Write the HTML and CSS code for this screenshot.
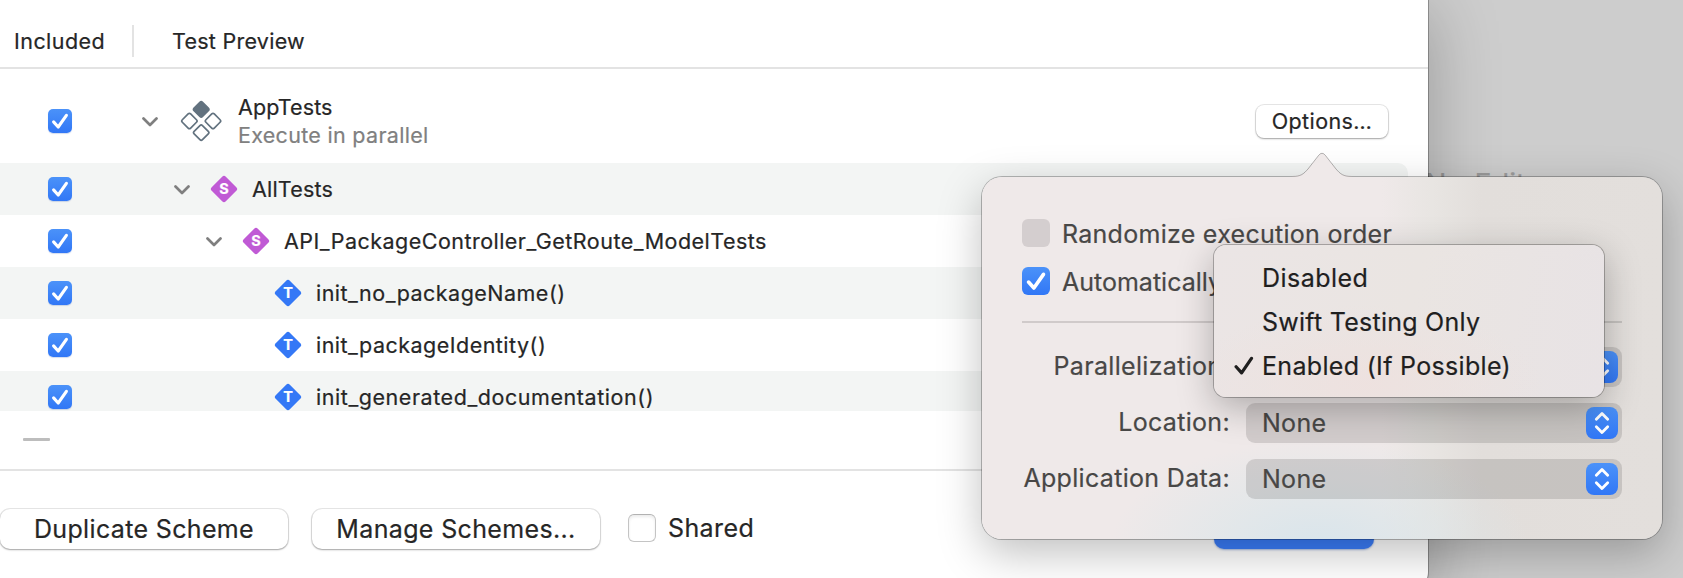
FILE: index.html
```html
<!DOCTYPE html>
<html lang="en">
<head>
<meta charset="utf-8">
<title>Scheme Tests</title>
<link rel="stylesheet" href="styles.css">
</head>
<body>
<svg class="defs" aria-hidden="true">
  <defs>
    <symbol id="tick" viewBox="0 0 24 24"><path d="M5.6 12.9 L10.2 18 L18.4 6.3" fill="none" stroke="#fff" stroke-width="3.1" stroke-linecap="round" stroke-linejoin="round"/></symbol>
    <symbol id="chev" viewBox="0 0 16 10"><path d="M1.5 1.5 L8 8 L14.5 1.5" fill="none" stroke="#7f7f7f" stroke-width="2.7" stroke-linecap="round" stroke-linejoin="round"/></symbol>
    <symbol id="diamond" viewBox="0 0 28 28"><rect x="4" y="4" width="20" height="20" rx="2.6" transform="rotate(45 14 14)"/></symbol>
    <symbol id="updown" viewBox="0 0 32 32"><path d="M10.3 12.3 L16 6.5 L21.7 12.3 M10.3 19.7 L16 25.5 L21.7 19.7" fill="none" stroke="#fff" stroke-width="2.8" stroke-linecap="round" stroke-linejoin="round"/></symbol>
  </defs>
</svg>
<div class="screen">
  <main class="sheet">
    <header class="head">
      <span class="col-included">Included</span>
      <span class="col-sep"></span>
      <span class="col-preview">Test Preview</span>
    </header>
    <div class="list">
      <div class="row target">
        <span class="check"><svg><use href="#tick"/></svg></span>
        <svg class="chev lv0"><use href="#chev"/></svg>
        <svg class="target-icon" viewBox="0 0 42 42">
          <g fill="none" stroke="#62727f" stroke-width="1.7">
            <rect x="15.3" y="3.5" width="11.8" height="11.8" rx="1.8" transform="rotate(45 21.2 9.4)" fill="#62727f"/>
            <rect x="3.5" y="15.1" width="11.8" height="11.8" rx="1.8" transform="rotate(45 9.4 21)"/>
            <rect x="27.1" y="15.1" width="11.8" height="11.8" rx="1.8" transform="rotate(45 33 21)"/>
            <rect x="15.3" y="26.7" width="11.8" height="11.8" rx="1.8" transform="rotate(45 21.2 32.6)"/>
          </g>
        </svg>
        <div class="target-text"><span class="name">AppTests</span><span class="sub">Execute in parallel</span></div>
        <button class="btn small">Options…</button>
      </div>
      <div class="row alt">
        <span class="check"><svg><use href="#tick"/></svg></span>
        <svg class="chev lv1"><use href="#chev"/></svg>
        <span class="kind suite"><svg><use href="#diamond"/></svg><b>S</b></span>
        <span class="label tight">AllTests</span>
      </div>
      <div class="row">
        <span class="check"><svg><use href="#tick"/></svg></span>
        <svg class="chev lv2"><use href="#chev"/></svg>
        <span class="kind suite"><svg><use href="#diamond"/></svg><b>S</b></span>
        <span class="label">API_PackageController_GetRoute_ModelTests</span>
      </div>
      <div class="row alt">
        <span class="check"><svg><use href="#tick"/></svg></span>
        <span class="kind test"><svg><use href="#diamond"/></svg><b>T</b></span>
        <span class="label wide">init_no_packageName()</span>
      </div>
      <div class="row">
        <span class="check"><svg><use href="#tick"/></svg></span>
        <span class="kind test"><svg><use href="#diamond"/></svg><b>T</b></span>
        <span class="label wide">init_packageIdentity()</span>
      </div>
      <div class="row alt">
        <span class="check"><svg><use href="#tick"/></svg></span>
        <span class="kind test"><svg><use href="#diamond"/></svg><b>T</b></span>
        <span class="label wider">init_generated_documentation()</span>
      </div>
    </div>
    <div class="tools"><span class="minus"></span></div>
    <footer class="foot">
      <button class="btn">Duplicate Scheme</button>
      <button class="btn">Manage Schemes...</button>
      <label class="shared"><span class="box"></span>Shared</label>
      <span class="primary"></span>
    </footer>
  </main>
  <aside class="editor"><span>No Editor</span></aside>

  <section class="popover">
    <svg class="arrow" viewBox="0 0 64 27"><path d="M2 25 C11 25 13.500 23 18 18 L28.500 4.500 Q32 0 35.500 4.500 L46 18 C50.500 23 53 25 62 25 V27 H2 Z" fill="#efe9e9"/><path d="M2 25.500 C11 25.500 13.500 23 18 18 L28.500 4.500 Q32 0 35.500 4.500 L46 18 C50.500 23 53 25.500 62 25.500" fill="none" stroke="#000" stroke-opacity=".28"/></svg>
    <div class="opt"><span class="box28"></span><span class="cap">Randomize execution order</span></div>
    <div class="opt second"><span class="box28 on"><svg><use href="#tick"/></svg></span><span class="cap auto">Automatically</span></div>
    <hr class="rule">
    <div class="form">
      <span class="key">Parallelization:</span><span class="pop"><i></i><span class="step"><svg><use href="#updown"/></svg></span></span>
      <span class="key">Location:</span><span class="pop"><i>None</i><span class="step"><svg><use href="#updown"/></svg></span></span>
      <span class="key">Application Data:</span><span class="pop"><i>None</i><span class="step"><svg><use href="#updown"/></svg></span></span>
    </div>
  </section>

  <div class="menu">
    <div class="item"><span class="mark"></span><span class="dis">Disabled</span></div>
    <div class="item"><span class="mark"></span><span class="swift">Swift Testing Only</span></div>
    <div class="item"><span class="mark"><svg viewBox="0 0 20 20"><path d="M2.100 10.800 L7.600 16.900 L17.500 2.400" fill="none" stroke="#1f1f1f" stroke-width="3.200" stroke-linecap="round" stroke-linejoin="round"/></svg></span><span>Enabled (If Possible)</span></div>
  </div>
</div>
</body>
</html>
```
FILE: styles.css
```css
* { box-sizing: border-box; }
body { margin: 0; overflow: hidden; font-family: Inter, "Liberation Sans", sans-serif; color: #262626; -webkit-text-stroke: .2px; }
.defs { position: absolute; width: 0; height: 0; }
.screen { position: relative; display: flex; width: 1683px; height: 578px; overflow: hidden; background: #cdcdcd; }

/* Sheet */
.sheet { position: relative; z-index: 1; flex: none; display: flex; flex-direction: column; width: 1428px; height: 592px; background: #fff; border-radius: 0 0 20px 0; box-shadow: 0 0 0 1px rgba(0,0,0,.27), 0 10px 70px rgba(0,0,0,.27); font-size: 21.5px; letter-spacing: .44px; }
.head { flex: none; display: flex; align-items: center; height: 69px; padding: 15px 0 0 14px; border-bottom: 2px solid #e3e3e3; }
.col-included { width: 118px; letter-spacing: .45px; }
.col-sep { width: 2px; height: 32px; background: #e3e3e3; }
.col-preview { margin-left: 38px; letter-spacing: .26px; }
.list { flex: none; height: 342px; overflow: hidden; padding-right: 20px; }
.row { display: flex; align-items: center; height: 52px; padding-left: 48px; }
.row.alt { background: #f3f5f4; border-radius: 0 10px 10px 0; }
.target { height: 94px; padding-top: 10px; }
.check { flex: none; width: 24px; height: 24px; border-radius: 5px; background: linear-gradient(#4b92f9, #3177f6); box-shadow: 0 1px 1px rgba(0,60,160,.18); }
.check svg { display: block; width: 24px; height: 24px; }
.chev { flex: none; width: 16px; height: 10px; margin-top: 1px; }
.lv0 { margin-left: 70px; }
.lv1 { margin-left: 102px; }
.lv2 { margin-left: 134px; }
.target-icon { flex: none; width: 42px; height: 42px; margin-left: 22px; }
.target-text { display: flex; flex-direction: column; margin-left: 16px; line-height: 28px; }
.name { letter-spacing: .1px; }
.sub { color: #808080; letter-spacing: .3px; }
.kind { flex: none; display: grid; width: 28px; height: 28px; margin-left: 20px; }
.kind svg, .kind b { grid-area: 1 / 1; width: 28px; height: 28px; }
.kind b { color: #fff; font-size: 14.500px; font-weight: 700; line-height: 28px; text-align: center; letter-spacing: 0; }
.suite { fill: #c05ad5; }
.test { margin-left: 202px; fill: #3478f6; }
.label { margin-left: 14px; letter-spacing: .47px; }
.label.tight { letter-spacing: .2px; }
.label.wide { letter-spacing: .48px; }
.label.wider { letter-spacing: .56px; }

.btn { height: 40px; padding: 0; border: 0; border-radius: 10px; background: #fff; box-shadow: 0 0 0 1px rgba(0,0,0,.09), 0 1px 2px rgba(0,0,0,.3); color: #262626; font: 25px Inter, "Liberation Sans", sans-serif; letter-spacing: .35px; width: 288px; -webkit-text-stroke: .2px; }
.btn.small { width: 132px; height: 33px; margin-left: auto; margin-right: 20px; border-radius: 8px; font-size: 21.500px; letter-spacing: .4px; }
.tools { flex: none; height: 60px; padding: 27px 0 0 23px; border-bottom: 2px solid #e3e3e3; }
.minus { display: block; width: 27px; height: 3px; border-radius: 1px; background: #bdbdbd; }
.foot { flex: none; display: flex; align-items: center; gap: 24px; height: 40px; margin-top: 38px; }
.shared { display: flex; align-items: center; height: 40px; margin: -2px 0 0 4px; font-size: 25px; letter-spacing: .4px; }
.box { width: 28px; height: 28px; margin-right: 12px; border: 1px solid #c4c4c4; border-top-color: #b2b2b2; border-radius: 6px; background: #fff; box-shadow: inset 0 2px 3px rgba(0,0,0,.08); }
.primary { width: 160px; height: 40px; margin-left: auto; margin-right: 54px; border-radius: 10px; background: #3a7cf8; box-shadow: 0 1px 2px rgba(30,80,180,.4); }

/* Editor behind the sheet */
.editor { flex: none; display: flex; align-items: flex-start; width: 255px; padding-top: 166px; }
.editor span { margin-left: -3px; color: #9c9c9c; font-size: 28.5px; line-height: 36px; white-space: nowrap; word-spacing: 3px; }

/* Options popover */
.popover { position: absolute; z-index: 2; left: 982px; top: 177px; width: 680px; height: 362px; padding: 40px 40px 0; border-radius: 20px; font-size: 25px; letter-spacing: .28px; color: #484746;
  background: radial-gradient(ellipse 210px 110px at 338px 372px, rgba(212,228,236,.85), rgba(218,230,234,.55) 50%, rgba(225,232,236,0)), linear-gradient(90deg, #efe9e9 0, #efe9e9 400px, #e8e5e2 450px, #e2dedb 500px, #e3dfdc 100%);
  box-shadow: 0 0 0 1px rgba(0,0,0,.26), 0 14px 44px rgba(0,0,0,.25); }
.arrow { position: absolute; left: 308px; top: -26px; width: 64px; height: 27px; }
.opt { display: flex; align-items: center; height: 32px; }
.opt.second { margin-top: 16px; }
.cap { padding-top: 2px; }
.box28 { flex: none; width: 28px; height: 28px; margin-right: 12px; border-radius: 6px; background: #d4cecf; }
.box28.on { background: linear-gradient(#4b92f9, #3177f6); }
.box28 svg { display: block; width: 28px; height: 28px; }
.auto { letter-spacing: 0; }
.rule { height: 2px; margin: 24px 0; border: 0; background: rgba(0,0,0,.13); }
.form { display: grid; grid-template-columns: 208px 376px; grid-auto-rows: 40px; row-gap: 16px; column-gap: 16px; margin-top: 24px; }
.key { text-align: right; line-height: 39px; white-space: nowrap; letter-spacing: .32px; }
.pop { display: flex; align-items: center; padding: 0 4px 0 16px; border-radius: 9px; background: rgba(0,0,0,.12); }
.pop i { flex: 1; font-style: normal; line-height: 38px; margin-top: -1px; }
.step { width: 32px; height: 32px; border-radius: 8px; background: linear-gradient(#4b92f9, #3177f6); }
.step svg { display: block; width: 32px; height: 32px; }

/* Pop-up menu */
.menu { position: absolute; z-index: 3; left: 1214px; top: 245px; width: 390px; height: 152px; padding-top: 11px; border-radius: 12px; font-size: 25px; letter-spacing: .32px; color: #1f1f1f;
  background: radial-gradient(ellipse 180px 80px at 150px 140px, rgba(238,225,223,.9), rgba(238,225,223,0)), linear-gradient(100deg, #ebe5e5, #eae5e2 50%, #e8e3e5);
  box-shadow: 0 0 0 1px rgba(0,0,0,.26), 0 10px 36px rgba(0,0,0,.28); }
.item { display: flex; align-items: center; height: 44px; padding-left: 20px; }
.mark { width: 20px; height: 20px; margin-right: 8px; }
.mark svg { display: block; width: 20px; height: 20px; }
.dis { letter-spacing: .45px; }
.swift { letter-spacing: .26px; }
```
